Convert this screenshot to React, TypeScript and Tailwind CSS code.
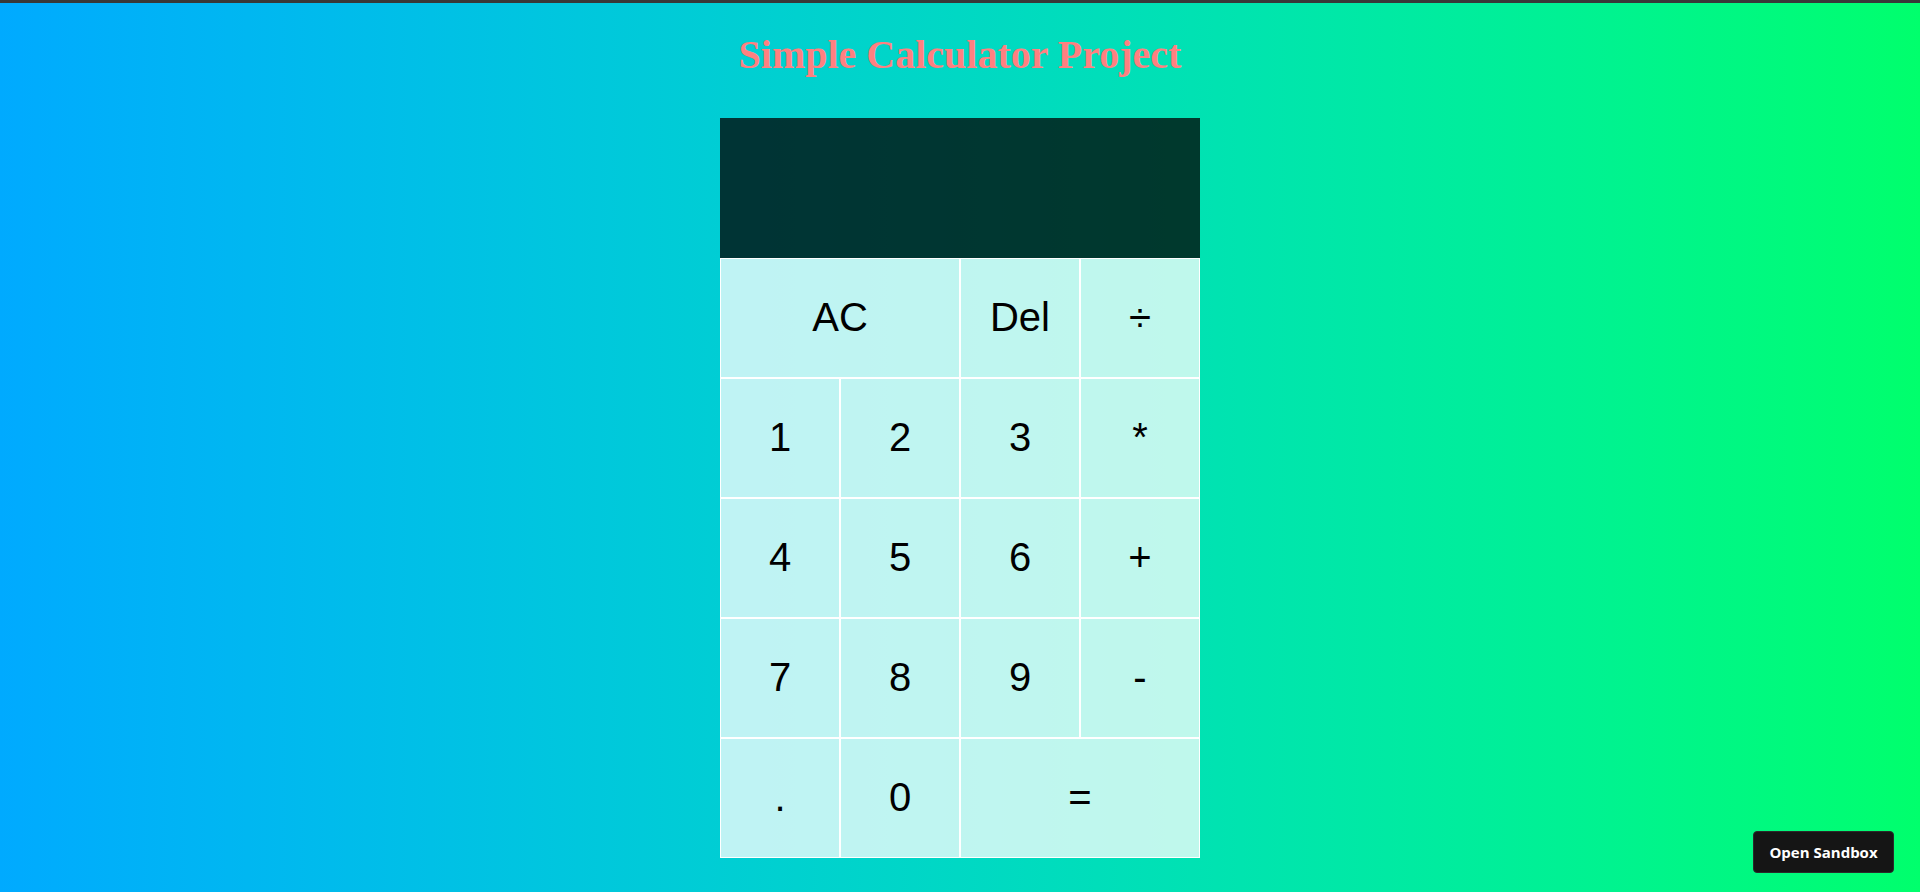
const keys: { label: string; wide?: boolean }[] = [
    { label: "AC", wide: true },
    { label: "Del" },
    { label: "÷" },
    { label: "1" },
    { label: "2" },
    { label: "3" },
    { label: "*" },
    { label: "4" },
    { label: "5" },
    { label: "6" },
    { label: "+" },
    { label: "7" },
    { label: "8" },
    { label: "9" },
    { label: "-" },
    { label: "." },
    { label: "0" },
    { label: "=", wide: true },
];

export default function App() {
    return (
        <div className="relative min-h-[892px] bg-gradient-to-r from-[#00aaff] to-[#00ff6c]">
            <div className="h-[3px] bg-[#383838]" />
            <h1 className="pt-[29px] text-center font-['Liberation_Serif',serif] text-[40px] font-bold leading-[46px] text-[#ff8080]">
                Simple Calculator Project
            </h1>
            <div className="mt-[40px] flex justify-center">
                <div className="w-[480px]">
                    <div className="h-[140px] bg-black/75" />
                    <div className="grid grid-cols-[repeat(4,120px)]">
                        {keys.map((key) => (
                            <button
                                key={key.label}
                                className={`${key.wide ? "col-span-2" : ""} flex h-[120px] cursor-pointer items-center justify-center border border-white bg-white/75 pb-[2px] font-['Liberation_Sans',Arial,sans-serif] text-[40px] text-black outline-none`}
                            >
                                {key.label}
                            </button>
                        ))}
                    </div>
                </div>
            </div>
            <button className="absolute bottom-[19px] right-[26px] h-[42px] w-[141px] rounded-[4px] border border-[#2a2a2a] bg-[#151515] font-['Open_Sans',sans-serif] text-[15px] font-bold text-white">
                Open Sandbox
            </button>
        </div>
    );
}
